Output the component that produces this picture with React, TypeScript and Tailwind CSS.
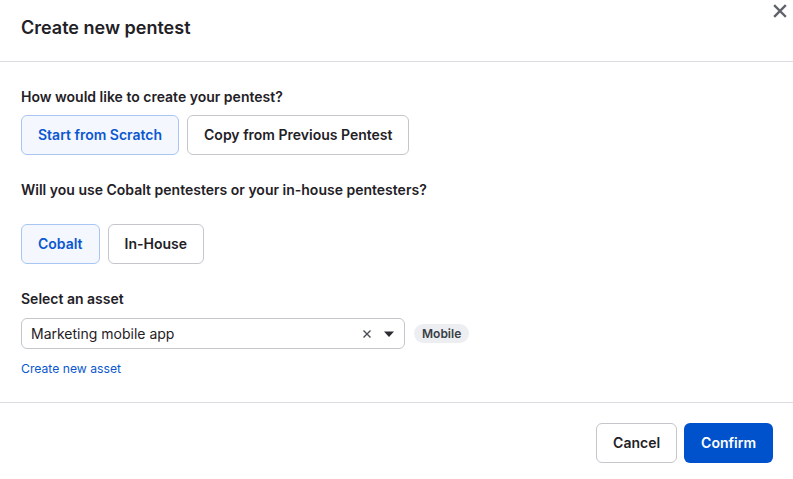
import { useState } from "react";

type Choice = { id: string; label: string };

function ToggleGroup({
    options,
    value,
    onChange,
}: {
    options: Choice[];
    value: string;
    onChange: (v: string) => void;
}) {
    return (
        <div className="flex gap-2">
            {options.map((o) => {
                const active = o.id === value;
                return (
                    <button
                        key={o.id}
                        onClick={() => onChange(o.id)}
                        className={
                            active
                                ? "h-[40px] px-4 rounded-md border border-[#a9c6f2] bg-[#f4f7fd] text-[#0b57d0] text-sm font-semibold"
                                : "h-[40px] px-4 rounded-md border border-[#c4c6cc] bg-white text-[#1f2126] text-sm font-semibold"
                        }
                    >
                        {o.label}
                    </button>
                );
            })}
        </div>
    );
}

export default function App() {
    const [source, setSource] = useState("scratch");
    const [team, setTeam] = useState("cobalt");

    return (
        <div
            className="w-[793px] h-[479px] bg-white text-[#1f2126] overflow-hidden"
            style={{ fontFamily: "Inter, 'Noto Sans', sans-serif" }}
        >
            <div className="relative h-[62px] border-b border-[#dcdde1] px-[21px] pt-[15px]">
                <h1 className="text-[18px] leading-[26px] font-semibold">Create new pentest</h1>
                <button className="absolute right-[4px] top-[2px] p-[2px] text-[#5f626b]" aria-label="Close">
                    <svg width="14" height="14" viewBox="0 0 14 14" fill="none">
                        <path d="M2 2L12 12M12 2L2 12" stroke="currentColor" strokeWidth="2.4" strokeLinecap="square" />
                    </svg>
                </button>
            </div>

            <div className="px-[21px] pt-[25px] pb-[25px] border-b border-[#dcdde1]">
                <p className="text-sm leading-5 font-semibold mb-[8px]">How would like to create your pentest?</p>
                <ToggleGroup
                    value={source}
                    onChange={setSource}
                    options={[
                        { id: "scratch", label: "Start from Scratch" },
                        { id: "copy", label: "Copy from Previous Pentest" },
                    ]}
                />

                <p className="text-sm leading-5 font-semibold mt-[25px] mb-[24px]">
                    Will you use Cobalt pentesters or your in-house pentesters?
                </p>
                <ToggleGroup
                    value={team}
                    onChange={setTeam}
                    options={[
                        { id: "cobalt", label: "Cobalt" },
                        { id: "inhouse", label: "In-House" },
                    ]}
                />

                <p className="text-sm leading-5 font-semibold mt-[25px] mb-[9px]">Select an asset</p>
                <div className="flex items-center gap-[9px]">
                    <div className="w-[384px] h-[31px] rounded-md border border-[#c4c6cc] flex items-center pl-[9px] pr-[9px]">
                        <span className="flex-1 text-sm">Marketing mobile app</span>
                        <svg width="10" height="10" viewBox="0 0 10 10" className="text-[#4a4d55] mr-[11px]">
                            <path d="M1.5 1.5L8.5 8.5M8.5 1.5L1.5 8.5" stroke="currentColor" strokeWidth="1.4" />
                        </svg>
                        <svg width="12" height="8" viewBox="0 0 12 8" className="text-[#2b2d33]">
                            <path d="M1 1.5H11L6 7Z" fill="currentColor" />
                        </svg>
                    </div>
                    <span className="h-[19px] px-[8px] rounded-full bg-[#eceef1] text-[12px] leading-[19px] font-semibold text-[#3b3e45]">
                        Mobile
                    </span>
                </div>
                <a href="#" className="block mt-[12px] text-[12.2px] leading-4 text-[#0b57d0]">
                    Create new asset
                </a>
            </div>

            <div className="flex justify-end gap-[7px] px-[20px] pt-[20px]">
                <button className="h-[40px] px-4 rounded-md border border-[#c4c6cc] bg-white text-sm font-semibold text-[#1f2126]">
                    Cancel
                </button>
                <button className="h-[40px] px-[17px] rounded-md bg-[#0052cc] text-sm font-semibold text-white">
                    Confirm
                </button>
            </div>
        </div>
    );
}
